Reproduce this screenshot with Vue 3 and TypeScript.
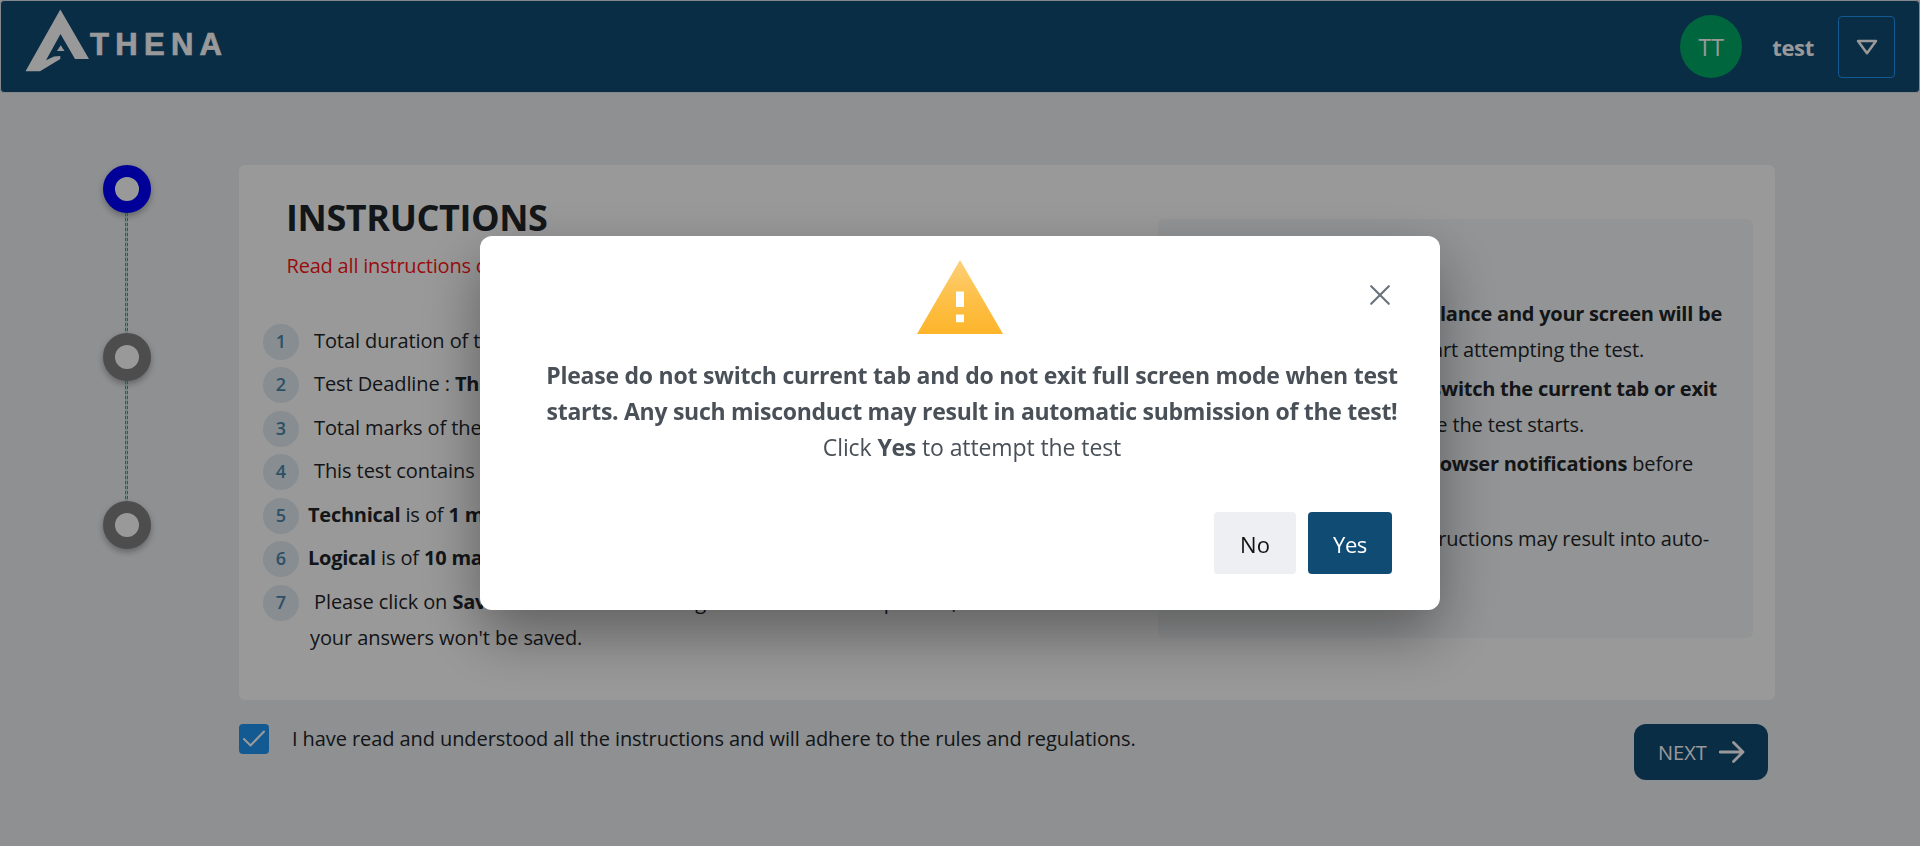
<script setup lang="ts">
import { ref } from 'vue'

interface Segment {
  text: string
  bold?: boolean
}

interface Rule {
  inset: number
  segments: Segment[]
}

const steps = ref([
  { id: 1, active: true },
  { id: 2, active: false },
  { id: 3, active: false },
])

const instructions: { lead: boolean; segments: Segment[]; extra?: string }[] = [
  { lead: true, segments: [{ text: 'Total duration of the test is ' }, { text: '30 minutes', bold: true }] },
  { lead: true, segments: [{ text: 'Test Deadline : ' }, { text: 'Thursday', bold: true }] },
  { lead: true, segments: [{ text: 'Total marks of the test are ' }, { text: '20', bold: true }] },
  { lead: true, segments: [{ text: 'This test contains ' }, { text: '2 sections', bold: true }] },
  { lead: false, segments: [{ text: 'Technical', bold: true }, { text: ' is of ' }, { text: '1 marks', bold: true }] },
  { lead: false, segments: [{ text: 'Logical', bold: true }, { text: ' is of ' }, { text: '10 marks', bold: true }] },
  {
    lead: true,
    segments: [
      { text: 'Please click on ' },
      { text: 'Save', bold: true },
      { text: ' button and answering then all of the test portion, else' },
    ],
    extra: "your answers won't be saved.",
  },
]

const rules: { lines: Rule[] }[] = [
  {
    lines: [
      { inset: 31, segments: [{ text: 'Test is under surveillance and your screen will be', bold: true }] },
      { inset: 109, segments: [{ text: 'recorded once you start attempting the test.' }] },
    ],
  },
  {
    lines: [
      { inset: 36, segments: [{ text: 'Please ' }, { text: 'do not switch the current tab or exit', bold: true }] },
      { inset: 169, segments: [{ text: 'full screen', bold: true }, { text: ' once the test starts.' }] },
    ],
  },
  {
    lines: [
      { inset: 60, segments: [{ text: 'Turn off all ' }, { text: 'browser notifications', bold: true }, { text: ' before' }] },
      { inset: 400, segments: [{ text: 'starting the test.' }] },
    ],
  },
  {
    lines: [
      { inset: 44, segments: [{ text: 'Violating the instructions may result into auto-' }] },
      { inset: 360, segments: [{ text: 'submission of the test.' }] },
    ],
  },
]

const accepted = ref(true)
const dialogOpen = ref(true)
</script>

<template>
  <div class="page">
    <header class="topbar">
      <div class="brand">
        <svg class="brand-mark" width="66" height="64" viewBox="0 0 66 64" aria-hidden="true">
          <path
            fill="#fff"
            fill-rule="evenodd"
            d="M36.3 .5 65 50H51L36.5 25 22 51.2 30 47.5 36.3 47V50L16 62.3H1.500Z"
          />
          <path fill="#fff" d="M36.7 36.200 40.500 42H33Z" />
        </svg>
        <span class="brand-name">THENA</span>
      </div>
      <div class="account">
        <span class="avatar">TT</span>
        <span class="username">test</span>
        <button class="menu-button" type="button" aria-label="Account menu">
          <svg width="22" height="18" viewBox="0 0 22 18">
            <path d="M2 3H20L11 15.300Z" fill="none" stroke="#fff" stroke-width="2.500" stroke-linejoin="round" />
          </svg>
        </button>
      </div>
    </header>

    <main class="content">
      <ol class="stepper">
        <li v-for="step in steps" :key="step.id" class="step">
          <span class="step-dot" :class="{ active: step.active }"></span>
        </li>
      </ol>

      <section class="main-column">
        <div class="card">
          <div class="card-left">
            <h1 class="title">INSTRUCTIONS</h1>
            <p class="notice">Read all instructions carefully</p>
            <ol class="list">
              <li v-for="(item, i) in instructions" :key="i" class="list-item">
                <span class="badge">{{ i + 1 }}</span>
                <div class="item-text" :class="{ lead: item.lead }">
                  <div class="line">
                    <span v-for="(s, k) in item.segments" :key="k" :class="{ bold: s.bold }">{{ s.text }}</span>
                  </div>
                  <div v-if="item.extra" class="line extra">{{ item.extra }}</div>
                </div>
              </li>
            </ol>
          </div>
          <div class="rules">
            <div v-for="(rule, i) in rules" :key="i" class="rule">
              <div
                v-for="(line, j) in rule.lines"
                :key="j"
                class="line rule-line"
                :style="{ paddingRight: line.inset + 'px' }"
              >
                <span v-for="(s, k) in line.segments" :key="k" :class="{ bold: s.bold }">{{ s.text }}</span>
              </div>
            </div>
          </div>
        </div>

        <div class="footer-row">
          <label class="agree">
            <span class="checkbox">
              <svg v-if="accepted" width="22" height="18" viewBox="0 0 22 18">
                <path d="M1 9 7.500 15.500 21 1.500" fill="none" stroke="#fff" stroke-width="2.100" stroke-linecap="round" stroke-linejoin="round" />
              </svg>
            </span>
            <span class="line agree-text">I have read and understood all the instructions and will adhere to the rules and regulations.</span>
          </label>
          <button class="next" type="button">
            <span>NEXT</span>
            <svg width="26" height="22" viewBox="0 0 26 22">
              <path d="M1 11H24M14.500 1.500 24 11 14.500 20.500" fill="none" stroke="#fff" stroke-width="2.800" stroke-linecap="round" stroke-linejoin="round" />
            </svg>
          </button>
        </div>
      </section>
    </main>

    <div v-if="dialogOpen" class="mask">
      <div class="dialog" role="dialog" aria-modal="true">
        <div class="dialog-head">
          <svg class="warning" width="86" height="74" viewBox="0 0 86 74">
            <defs>
              <linearGradient id="amber" x1="0" y1="0" x2="0" y2="1">
                <stop offset="0" stop-color="#fdd07a" />
                <stop offset=".5" stop-color="#fdc049" />
                <stop offset="1" stop-color="#fdb52a" />
              </linearGradient>
            </defs>
            <path d="M43 0 86 74H0Z" fill="url(#amber)" />
            <path d="M39 31.500H47V47H39ZM39 54.500H47V62.300H39Z" fill="#fff" />
          </svg>
          <button class="close" type="button" aria-label="Close" @click="dialogOpen = false">
            <svg width="22" height="22" viewBox="0 0 22 22">
              <path d="M2.200 2.200 19.800 19.800M19.800 2.200 2.200 19.800" stroke="#6c757d" stroke-width="2.200" stroke-linecap="round" />
            </svg>
          </button>
        </div>
        <div class="message">
          <div class="strong">Please do not switch current tab and do not exit full screen mode when test</div>
          <div class="strong tight">starts. Any such misconduct may result in automatic submission of the test!</div>
          <div>Click <span class="strong">Yes</span> to attempt the test</div>
        </div>
        <div class="actions">
          <button class="btn btn-no" type="button" @click="dialogOpen = false">No</button>
          <button class="btn btn-yes" type="button">Yes</button>
        </div>
      </div>
    </div>
  </div>
</template>

<style>
html,
body {
  margin: 0;
  overflow: hidden;
}
</style>

<style scoped>
* {
  box-sizing: border-box;
}

.page {
  height: 846px;
  overflow: hidden;
  background: #edf0f3;
  color: #212529;
  font-family: 'Open Sans', 'Noto Sans', sans-serif;
  font-size: 20px;
}

button {
  font-family: inherit;
  padding: 0;
  cursor: pointer;
}

.topbar {
  display: flex;
  justify-content: space-between;
  height: 93px;
  padding: 0 24px;
  border: 1px solid #dee2e6;
  border-radius: 4px;
  background: #104b74;
  color: #fff;
}

.brand {
  display: flex;
  align-items: flex-start;
  padding-top: 8px;
}

.brand-mark {
  display: block;
  margin-left: -1px;
}

.brand-name {
  margin: 19px 0 0 0;
  font-family: 'Liberation Sans', Arial, sans-serif;
  font-size: 31px;
  font-weight: 700;
  line-height: 34px;
  letter-spacing: 6.300px;
  -webkit-text-stroke: 0.700px #fff;
}

.account {
  display: flex;
  align-items: center;
}

.avatar {
  display: flex;
  align-items: center;
  justify-content: center;
  width: 62px;
  height: 63px;
  border-radius: 50%;
  background: #00ab66;
  font-size: 23px;
}

.username {
  margin: 0 24px 0 30px;
  font-size: 22px;
  font-weight: 700;
  letter-spacing: -0.300px;
}

.menu-button {
  display: flex;
  align-items: center;
  justify-content: center;
  width: 57px;
  height: 62px;
  border: 1px solid #2196f3;
  border-radius: 4px;
  background: transparent;
}

.content {
  display: flex;
  padding-top: 72px;
}

.stepper {
  display: flex;
  flex-direction: column;
  width: 48px;
  margin: 0 88px 0 103px;
  padding: 0;
  list-style: none;
}

.step {
  display: flex;
  flex-direction: column;
  align-items: center;
}

.step + .step::before {
  content: '';
  width: 3px;
  height: 120px;
  margin-right: 1px;
  background:
    repeating-linear-gradient(#10b981 0 3px, transparent 3px 5px) left / 1px 100% no-repeat,
    repeating-linear-gradient(#10b981 0 3px, transparent 3px 5px) right / 1px 100% no-repeat,
    rgba(16, 185, 129, 0.2);
}

.step-dot {
  width: 48px;
  height: 48px;
  border: 12px solid #808080;
  border-radius: 50%;
  background: #fff;
  box-shadow: 0 3px 6px rgba(0, 0, 0, 0.3);
}

.step-dot.active {
  border-color: #0000ff;
}

.main-column {
  width: 1536px;
}

.card {
  display: flex;
  justify-content: space-between;
  height: 535px;
  padding: 30px 22px 0 24px;
  border-radius: 6px;
  background: #fff;
}

.card-left {
  width: 860px;
  padding-top: 1px;
}

.title {
  margin: 0 0 8px 23px;
  font-size: 36px;
  font-weight: 700;
  line-height: 44px;
  letter-spacing: -0.400px;
}

.notice {
  margin: 0 0 38.500px 23.500px;
  color: #ff1414;
  line-height: 36px;
  letter-spacing: -0.200px;
}

.list {
  margin: 0;
  padding: 0;
  list-style: none;
}

.list-item {
  display: flex;
  align-items: flex-start;
  gap: 9px;
  margin-bottom: 6.500px;
}

.badge {
  flex: none;
  width: 36px;
  height: 36px;
  margin-top: 1px;
  border-radius: 50%;
  background: #e1ecf1;
  color: #4b86ac;
  font-size: 18px;
  font-weight: 600;
  line-height: 35px;
  text-align: center;
}

.line {
  line-height: 36px;
  letter-spacing: -0.150px;
  white-space: pre;
}

.item-text .line {
  letter-spacing: -0.090px;
}

.line .bold {
  font-weight: 700;
  letter-spacing: -0.250px;
}

.lead {
  padding-left: 6px;
}

.extra {
  margin-left: -4px;
}

.rules {
  width: 595px;
  height: 419px;
  margin-top: 24px;
  padding-top: 77px;
  border-radius: 6px;
  background: #f5f7f9;
}

.rule {
  margin-bottom: 3px;
}

.rule-line {
  display: flex;
  justify-content: flex-end;
}

.footer-row {
  display: flex;
  justify-content: space-between;
  align-items: flex-start;
  padding: 24px 7px 0 0;
}

.agree {
  display: flex;
}

.checkbox {
  display: flex;
  align-items: center;
  justify-content: center;
  width: 30px;
  height: 30px;
  border-radius: 4px;
  background: #2196f3;
}

.agree-text {
  margin: -3px 0 0 23px;
  letter-spacing: -0.085px;
}

.next {
  display: flex;
  align-items: center;
  gap: 12px;
  width: 134px;
  height: 56px;
  padding-left: 24px;
  border: 0;
  border-radius: 12px;
  background: #104b74;
  color: #fff;
  font-size: 20px;
}

.mask {
  position: fixed;
  inset: 0;
  display: flex;
  align-items: center;
  justify-content: center;
  background: rgba(0, 0, 0, 0.4);
}

.dialog {
  width: 960px;
  height: 374px;
  padding: 24px 48px 0;
  border-radius: 12px;
  background: #fff;
  color: #495057;
  box-shadow: 0 24px 60px rgba(0, 0, 0, 0.38);
}

.dialog-head {
  display: grid;
  grid-template-columns: 1fr auto 1fr;
}

.warning {
  display: block;
  grid-column: 2;
}

.close {
  display: flex;
  align-items: center;
  justify-content: center;
  justify-self: end;
  width: 24px;
  height: 48px;
  margin-top: 11px;
  border: 0;
  background: transparent;
}

.message {
  margin: 23px -12px 0 12px;
  font-size: 23px;
  line-height: 36px;
  letter-spacing: -0.100px;
  text-align: center;
  white-space: nowrap;
}

.strong {
  font-weight: 700;
  letter-spacing: -0.230px;
}

.strong.tight {
  letter-spacing: -0.280px;
}

.actions {
  display: flex;
  justify-content: flex-end;
  gap: 12px;
  margin-top: 47px;
}

.btn {
  height: 62px;
  padding-top: 2px;
  border: 0;
  border-radius: 4px;
  font-size: 22px;
}

.btn-no {
  width: 82px;
  background: #eeeff2;
  color: #121212;
}

.btn-yes {
  width: 84px;
  background: #104b74;
  color: #fff;
  font-weight: 500;
  letter-spacing: -0.400px;
}
</style>
